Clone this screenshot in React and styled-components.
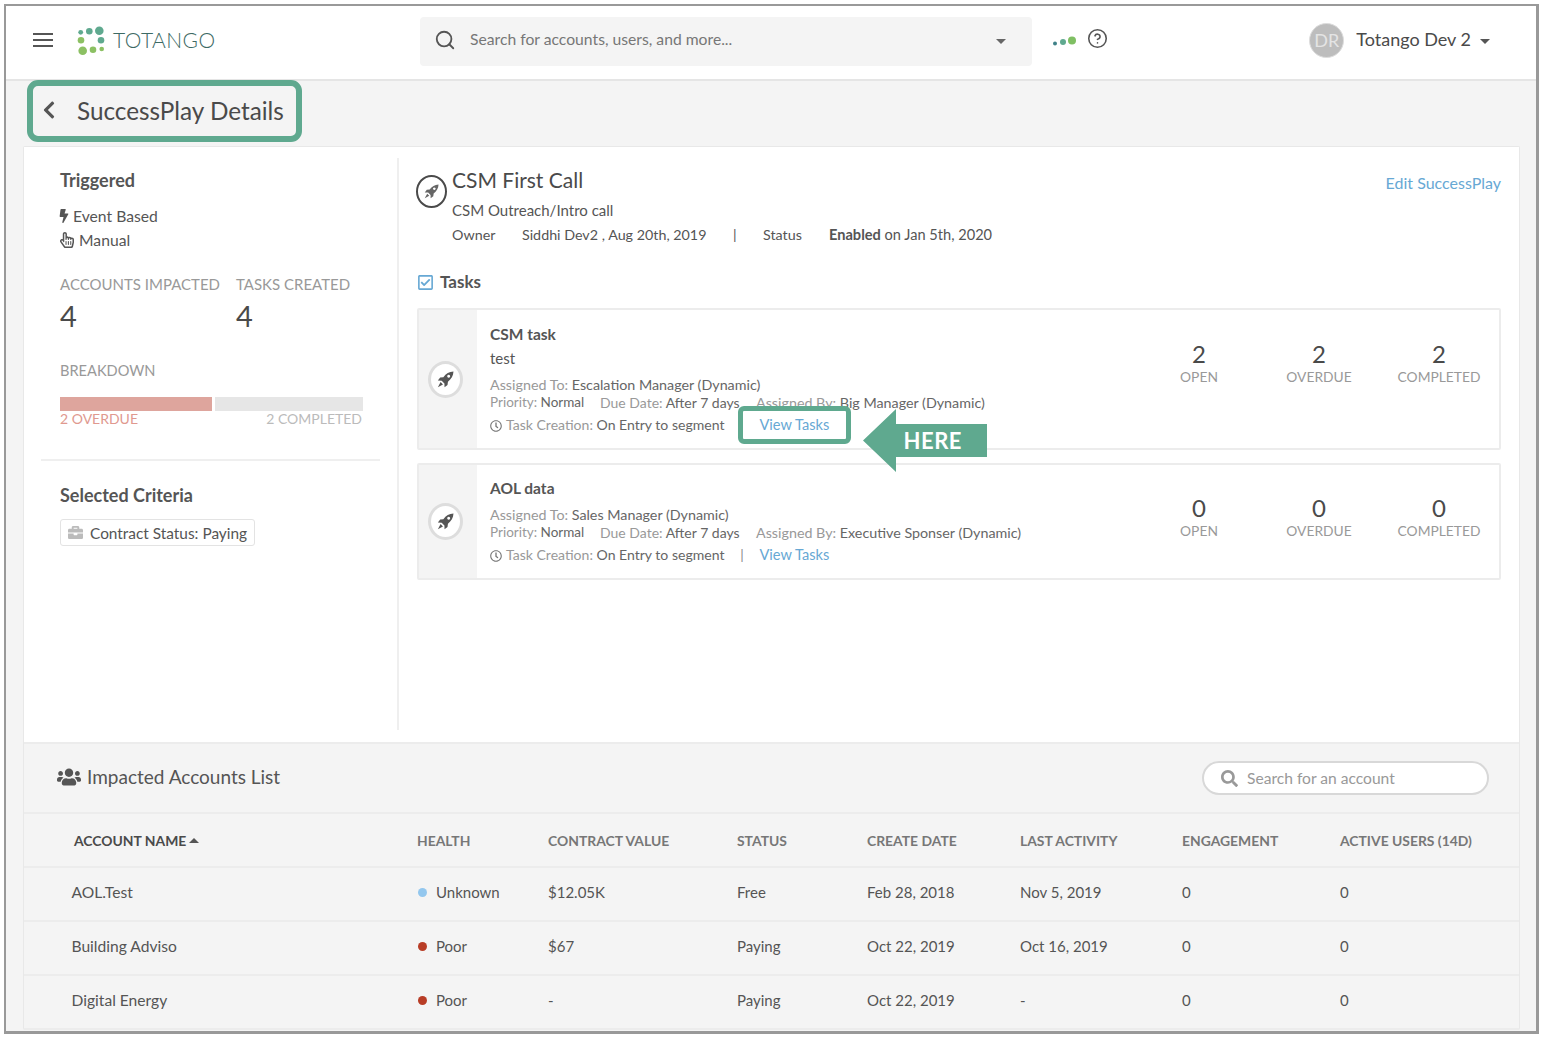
import React from 'react';
import styled, { createGlobalStyle } from 'styled-components';
import {
  FaBolt,
  FaBriefcase,
  FaChevronLeft,
  FaRegCheckSquare,
  FaRegClock,
  FaRegHandPointer,
  FaSearch,
  FaUsers,
} from 'react-icons/fa';
import { CircleHelp, Search } from 'lucide-react';

const GlobalStyle = createGlobalStyle`
  html, body {
    margin: 0;
    padding: 0;
    background: #fff;
  }
  body {
    font-family: "Lato", "Open Sans", sans-serif;
    color: #4a4a4a;
  }
  * {
    box-sizing: border-box;
  }
`;

const Frame = styled.div`
  width: 1535px;
  height: 1030px;
  margin: 4px 0 0 4px;
  border: 2px solid #999;
  border-right-width: 3px;
  border-bottom-width: 3px;
  background: #f4f4f4;
  overflow: hidden;
`;

const Header = styled.header`
  display: flex;
  align-items: center;
  height: 75px;
  background: #fff;
  border-bottom: 2px solid #e5e5e5;
  padding: 0 46px 3px 27px;
`;

const MenuButton = styled.div`
  display: flex;
  flex-direction: column;
  gap: 4px;
  width: 20px;
  margin: -2px 24px 0 0;

  span {
    height: 2px;
    background: #555;
  }
`;

const Logo = styled.div`
  display: flex;
  align-items: center;
  width: 343px;
  gap: 8px;

  svg {
    margin-top: -2px;
  }
`;

const LogoText = styled.span`
  margin-top: -3px;
  font-size: 21px;
  font-weight: 300;
  letter-spacing: 0.45px;
  color: #3d6a64;
`;

const SearchBar = styled.div`
  display: flex;
  align-items: center;
  width: 612px;
  height: 49px;
  background: #f4f4f4;
  border-radius: 4px;
  padding: 0 26px 0 14px;
  font-size: 15.7px;
  color: #777;

  svg {
    color: #555;
    margin: -3px 14px 0 0;
  }
`;

const SearchHint = styled.span`
  flex: 1;
  margin-top: -4px;
`;

const Caret = styled.span`
  width: 0;
  height: 0;
  border-left: 5px solid transparent;
  border-right: 5px solid transparent;
  border-${(p) => (p.$up ? 'bottom' : 'top')}: 5px solid ${(p) => p.$color || '#666'};
`;

const StatusTools = styled.div`
  display: flex;
  align-items: center;
  gap: 11px;
  margin-left: 20px;
  color: #555;
  flex: 1;

  svg:last-child {
    margin-top: -6px;
  }
`;

const UserMenu = styled.div`
  display: flex;
  align-items: center;
  font-size: 18px;
  color: #4a4a4a;
`;

const Avatar = styled.div`
  display: flex;
  align-items: center;
  justify-content: center;
  width: 35px;
  height: 35px;
  margin: -2px 12px 0 0;
  border-radius: 50%;
  background: #bdbdbd;
  border: 1px solid #ddd;
  color: #e4e4e4;
  font-size: 18px;
`;

const UserName = styled.span`
  margin: -4px 9px 0 0;
`;

const TitleBox = styled.div`
  display: flex;
  align-items: center;
  width: 275px;
  height: 62px;
  margin: -1px 0 4px 21px;
  border: 6px solid #5fa98f;
  border-radius: 11px;
  padding: 0 0 2px 6px;
  color: #555;

  svg {
    margin-right: 18px;
  }
`;

const PageTitle = styled.h1`
  margin: 0;
  font-size: 24.3px;
  font-weight: 400;
  color: #4a4a4a;
  white-space: nowrap;
`;

const Card = styled.main`
  width: 1497px;
  margin-left: 17px;
  border: 1px solid #e8e8e8;
  border-bottom: 0;
  border-radius: 2px;
`;

const TopSection = styled.section`
  display: flex;
  height: 597px;
  background: #fff;
  padding: 11px 0 12px;
  border-bottom: 2px solid #ececec;
`;

const LeftPanel = styled.aside`
  width: 375px;
  border-right: 2px solid #efefef;
  padding: 12px 17px 0 17px;
`;

const PanelBlock = styled.div`
  padding-left: 19px;
`;

const BoldHeading = styled.h3`
  margin: 0;
  font-size: 18px;
  font-weight: 700;
  line-height: 20px;
  color: #555;
`;

const TriggerRow = styled.div`
  display: flex;
  align-items: center;
  gap: ${(p) => p.$gap}px;
  height: 24px;
  font-size: 15.7px;
  color: #555;

  svg {
    margin-left: ${(p) => p.$iconOffset}px;
  }
`;

const TriggerList = styled.div`
  margin-top: 14px;
`;

const Metrics = styled.div`
  display: flex;
  margin-top: 22px;
`;

const Metric = styled.div`
  width: ${(p) => p.$width}px;
`;

const MutedLabel = styled.div`
  font-size: 15px;
  line-height: 20px;
  color: #999;
  white-space: nowrap;
`;

const MetricValue = styled.div`
  margin-top: 4px;
  font-size: 29px;
  line-height: 36px;
  color: #4a4a4a;
`;

const Breakdown = styled.div`
  margin-top: 27px;
`;

const BreakdownLabel = styled(MutedLabel)`
  font-size: 14.6px;
`;

const BarRow = styled.div`
  display: flex;
  gap: 3px;
  margin-top: 16px;
`;

const BarPiece = styled.div`
  width: ${(p) => p.$width}px;
  height: 14px;
  background: ${(p) => p.$color};
`;

const BarLabels = styled.div`
  display: flex;
  justify-content: space-between;
  width: 302px;
  font-size: 14px;
  line-height: 16px;
`;

const BarLabel = styled.span`
  color: ${(p) => p.$color};
`;

const PanelDivider = styled.div`
  height: 2px;
  margin-top: 32px;
  background: #efefef;
`;

const CriteriaBlock = styled(PanelBlock)`
  margin-top: 24px;
`;

const CriteriaChip = styled.div`
  display: inline-flex;
  align-items: center;
  gap: 7px;
  height: 27px;
  margin-top: 14px;
  padding: 0 7px;
  border: 1px solid #e3e3e3;
  border-radius: 3px;
  font-size: 15.4px;
  color: #555;

  svg {
    color: #bbb;
  }
`;

const RightPanel = styled.div`
  position: relative;
  flex: 1;
  padding: 8px 18px 0 18px;
`;

const PlayHeader = styled.div`
  display: flex;
  gap: 5px;
`;

const PlayIcon = styled.div`
  display: flex;
  align-items: center;
  justify-content: center;
  flex: none;
  width: 31px;
  height: 33px;
  margin: 9px 0 0 -1px;
  border: 2px solid #4a4a4a;
  border-radius: 50%;
  color: #666;
`;

const PlayBody = styled.div`
  flex: 1;
`;

const PlayTitleRow = styled.div`
  display: flex;
  justify-content: space-between;
  align-items: flex-start;
`;

const PlayTitle = styled.h2`
  margin: 0;
  font-size: 21px;
  font-weight: 400;
  line-height: 28px;
  color: #4a4a4a;
`;

const TextLink = styled.a`
  color: #67a8d4;
  white-space: nowrap;
`;

const EditLink = styled(TextLink)`
  margin-top: 7px;
  font-size: 16px;
`;

const PlaySubtitle = styled.div`
  margin-top: 7px;
  font-size: 15px;
  line-height: 18px;
  color: #555;
`;

const PlayMeta = styled.div`
  display: flex;
  margin-top: 7px;
  font-size: 14.3px;
  line-height: 18px;
  color: #555;
`;

const MetaItem = styled.span`
  width: ${(p) => p.$width}px;
  white-space: nowrap;
`;

const EnabledItem = styled.span`
  font-size: 14.6px;
  white-space: nowrap;

  b {
    font-weight: 700;
  }
`;

const TasksHeading = styled.div`
  display: flex;
  align-items: center;
  gap: 6px;
  margin-top: 27px;
  font-size: 17px;
  font-weight: 700;
  line-height: 22px;
  color: #555;

  svg {
    color: #67a8d4;
  }
`;

const TaskList = styled.div`
  position: relative;
  display: flex;
  flex-direction: column;
  gap: 13px;
  margin-top: 15px;
`;

const TaskCard = styled.article`
  display: flex;
  height: ${(p) => p.$height}px;
  border: 2px solid #ececec;
  border-radius: 2px;
`;

const TaskGutter = styled.div`
  display: flex;
  align-items: center;
  justify-content: center;
  width: 58px;
  padding-right: 5px;
  background: #f4f4f4;
`;

const RocketBadge = styled.div`
  display: flex;
  align-items: center;
  justify-content: center;
  width: 35px;
  height: 37px;
  border: 3px solid #ddd;
  border-radius: 50%;
  background: #fff;
  color: #555;
`;

const TaskBody = styled.div`
  flex: 1;
  padding: ${(p) => p.$top}px 0 0 13px;
  line-height: 17.5px;
  color: #999;
`;

const TaskName = styled.div`
  font-size: 15.5px;
  font-weight: 700;
  line-height: 20px;
  color: #555;
`;

const TaskDescription = styled.div`
  margin-top: 4px;
  font-size: 15px;
  line-height: 20px;
  color: #555;
`;

const TaskLine = styled.div`
  display: flex;
  align-items: center;
  height: 17.5px;
  margin-top: ${(p) => p.$top || 0}px;
  white-space: nowrap;

  svg {
    margin: 3px 4px 0 0;
    color: #777;
  }
`;

const TaskField = styled.span`
  width: ${(p) => (p.$width ? `${p.$width}px` : 'auto')};
  font-size: ${(p) => p.$size || 14.3}px;

  b {
    font-weight: 400;
    color: #666;
  }
`;

const LinkSeparator = styled.span`
  width: 35px;
  font-size: 14px;
  text-align: center;
  color: #888;
`;

const ViewTasksLink = styled(TextLink)`
  position: relative;
  font-size: 14.6px;

  ${(p) =>
    p.$highlighted &&
    `
    &::after {
      content: "";
      position: absolute;
      top: -10px;
      bottom: -10px;
      left: -21px;
      right: -22px;
      border: 5.5px solid #5fa98f;
      border-radius: 6px;
    }
  `}
`;

const TaskStats = styled.div`
  display: flex;
  width: 360px;
  padding-top: ${(p) => p.$top}px;
`;

const TaskStat = styled.div`
  width: 120px;
  text-align: center;
  font-size: 13.8px;
  line-height: 18px;
  color: #999;
`;

const TaskStatValue = styled.div`
  font-size: 24px;
  line-height: 29px;
  color: #4a4a4a;
`;

const HereArrow = styled.div`
  position: absolute;
  top: 101px;
  left: 446px;
  display: flex;
  align-items: center;
  justify-content: flex-end;
  width: 124px;
  height: 63px;
  padding-right: 25px;
  background: #5fa98f;
  clip-path: polygon(0 50%, 33px 0, 33px 15px, 100% 15px, 100% 48px, 33px 48px, 33px 100%);
  color: #fff;
  font-size: 22px;
  font-weight: 700;
  letter-spacing: 0.5px;
`;

const AccountsSection = styled.section`
  background: #f4f4f4;
`;

const AccountsBar = styled.div`
  display: flex;
  align-items: center;
  justify-content: space-between;
  height: 70px;
  padding: 0 30px 0 33px;
  border-bottom: 2px solid #ececec;
`;

const AccountsTitle = styled.div`
  display: flex;
  align-items: center;
  gap: 6px;
  margin-top: -3px;
  font-size: 19px;
  color: #555;
`;

const AccountSearch = styled.div`
  display: flex;
  align-items: center;
  gap: 9px;
  width: 287px;
  height: 34px;
  padding-left: 17px;
  background: #fff;
  border: 2px solid #d8d8d8;
  border-radius: 17px;
  font-size: 15.6px;
  color: #999;
`;

const TableRow = styled.div`
  display: grid;
  grid-template-columns: 393px 131px 189px 130px 153px 162px 158px 1fr;
  align-items: center;
  height: 54px;
  padding-bottom: ${(p) => (p.$header ? 0 : 4)}px;
  padding-top: ${(p) => (p.$header ? 1 : 0)}px;
  border-bottom: 2px solid #ececec;
`;

const HeaderCell = styled.div`
  display: flex;
  align-items: center;
  gap: 3px;
  padding-left: ${(p) => (p.$first ? 50 : 0)}px;
  font-size: 13.9px;
  font-weight: 700;
  color: ${(p) => (p.$sorted ? '#4a4a4a' : '#777')};
  white-space: nowrap;
`;

const BodyCell = styled.div`
  display: flex;
  align-items: center;
  gap: 9px;
  padding-left: ${(p) => (p.$first ? 47.5 : 0)}px;
  font-size: ${(p) => (p.$first ? 15.6 : 15)}px;
  color: #555;
  white-space: nowrap;
`;

const HealthDot = styled.span`
  width: 9px;
  height: 9px;
  margin-left: 1px;
  border-radius: 50%;
  background: ${(p) => p.$color};
`;

const tasks = [
  {
    name: 'CSM task',
    description: 'test',
    assignedTo: 'Escalation Manager (Dynamic)',
    assignedBy: 'Big Manager (Dynamic)',
    stats: [2, 2, 2],
    height: 142,
    bodyTop: 14,
    statsTop: 29,
    highlighted: true,
  },
  {
    name: 'AOL data',
    assignedTo: 'Sales Manager (Dynamic)',
    assignedBy: 'Executive Sponser (Dynamic)',
    stats: [0, 0, 0],
    height: 117,
    bodyTop: 13,
    statsTop: 28,
  },
];

const columns = [
  'ACCOUNT NAME',
  'HEALTH',
  'CONTRACT VALUE',
  'STATUS',
  'CREATE DATE',
  'LAST ACTIVITY',
  'ENGAGEMENT',
  'ACTIVE USERS (14D)',
];

const accounts = [
  { name: 'AOL.Test', health: 'Unknown', dot: '#93c7ee', value: '$12.05K', status: 'Free', created: 'Feb 28, 2018', activity: 'Nov 5, 2019' },
  { name: 'Building Adviso', health: 'Poor', dot: '#b83d26', value: '$67', status: 'Paying', created: 'Oct 22, 2019', activity: 'Oct 16, 2019' },
  { name: 'Digital Energy', health: 'Poor', dot: '#b83d26', value: '-', status: 'Paying', created: 'Oct 22, 2019', activity: '-' },
];

function TotangoMark() {
  return (
    <svg width="28" height="30" viewBox="0 0 28 30">
      <circle cx="3.7" cy="7.3" r="2.4" fill="#5fa98f" />
      <circle cx="12.3" cy="6.3" r="3.3" fill="#5fa98f" />
      <circle cx="22.3" cy="5.7" r="4.3" fill="#5fa98f" />
      <circle cx="4" cy="15.3" r="3.3" fill="#8cc063" />
      <circle cx="24" cy="15.3" r="3.3" fill="#5fa98f" />
      <circle cx="5.7" cy="25.7" r="4.3" fill="#8cc063" />
      <circle cx="16" cy="24.7" r="3.3" fill="#8cc063" />
      <circle cx="24.7" cy="24" r="2.3" fill="#8cc063" />
    </svg>
  );
}

function StatusDots() {
  return (
    <svg width="24" height="12" viewBox="0 0 24 12">
      <circle cx="3" cy="8.5" r="2" fill="#3f8188" />
      <circle cx="11" cy="7" r="3" fill="#5fa98f" />
      <circle cx="20" cy="5.5" r="4" fill="#7fbf63" />
    </svg>
  );
}

function RocketIcon({ size }) {
  return (
    <svg width={size} height={size} viewBox="0 0 16 16" fill="currentColor">
      <path
        fillRule="evenodd"
        d="M15.5.5C11.5.6 8.4 2.6 6 5.8L3 6.2.8 9l3.6.1 2.6 2.6.1 3.6 2.8-2.2.4-3C13.4 7.6 15.4 4.5 15.5.5ZM11 3.6a1.4 1.4 0 1 0 .01 0ZM3.4 10.4.8 15.2l4.8-2.6Z"
      />
    </svg>
  );
}

function TaskRow({ task }) {
  return (
    <TaskCard $height={task.height}>
      <TaskGutter>
        <RocketBadge>
          <RocketIcon size={17} />
        </RocketBadge>
      </TaskGutter>
      <TaskBody $top={task.bodyTop}>
        <TaskName>{task.name}</TaskName>
        {task.description && <TaskDescription>{task.description}</TaskDescription>}
        <TaskLine $top={8}>
          <TaskField>
            Assigned To: <b>{task.assignedTo}</b>
          </TaskField>
        </TaskLine>
        <TaskLine>
          <TaskField $width={110} $size={13.5}>
            Priority: <b>Normal</b>
          </TaskField>
          <TaskField $width={156} $size={14}>
            Due Date: <b>After 7 days</b>
          </TaskField>
          <TaskField>
            Assigned By: <b>{task.assignedBy}</b>
          </TaskField>
        </TaskLine>
        <TaskLine $top={5}>
          <FaRegClock size={12} />
          <TaskField $size={14.05}>
            Task Creation: <b>On Entry to segment</b>
          </TaskField>
          <LinkSeparator>{task.highlighted ? '' : '|'}</LinkSeparator>
          <ViewTasksLink $highlighted={task.highlighted}>View Tasks</ViewTasksLink>
        </TaskLine>
      </TaskBody>
      <TaskStats $top={task.statsTop}>
        {['OPEN', 'OVERDUE', 'COMPLETED'].map((label, i) => (
          <TaskStat key={label}>
            <TaskStatValue>{task.stats[i]}</TaskStatValue>
            {label}
          </TaskStat>
        ))}
      </TaskStats>
    </TaskCard>
  );
}

function App() {
  return (
    <>
      <GlobalStyle />
      <Frame>
        <Header>
          <MenuButton>
            <span />
            <span />
            <span />
          </MenuButton>
          <Logo>
            <TotangoMark />
            <LogoText>TOTANGO</LogoText>
          </Logo>
          <SearchBar>
            <Search size={22} strokeWidth={2} />
            <SearchHint>Search for accounts, users, and more...</SearchHint>
            <Caret />
          </SearchBar>
          <StatusTools>
            <StatusDots />
            <CircleHelp size={21} strokeWidth={1.8} />
          </StatusTools>
          <UserMenu>
            <Avatar>DR</Avatar>
            <UserName>Totango Dev 2</UserName>
            <Caret $color="#555" />
          </UserMenu>
        </Header>

        <TitleBox>
          <FaChevronLeft size={20} />
          <PageTitle>SuccessPlay Details</PageTitle>
        </TitleBox>

        <Card>
          <TopSection>
            <LeftPanel>
              <PanelBlock>
                <BoldHeading>Triggered</BoldHeading>
                <TriggerList>
                  <TriggerRow $gap={2} $iconOffset={-3}>
                    <FaBolt size={14} />
                    Event Based
                  </TriggerRow>
                  <TriggerRow $gap={4} $iconOffset={-1}>
                    <FaRegHandPointer size={16} />
                    Manual
                  </TriggerRow>
                </TriggerList>
                <Metrics>
                  <Metric $width={176}>
                    <MutedLabel>ACCOUNTS IMPACTED</MutedLabel>
                    <MetricValue>4</MetricValue>
                  </Metric>
                  <Metric $width={120}>
                    <MutedLabel>TASKS CREATED</MutedLabel>
                    <MetricValue>4</MetricValue>
                  </Metric>
                </Metrics>
                <Breakdown>
                  <BreakdownLabel>BREAKDOWN</BreakdownLabel>
                  <BarRow>
                    <BarPiece $width={152} $color="#dea59d" />
                    <BarPiece $width={148} $color="#e6e6e6" />
                  </BarRow>
                  <BarLabels>
                    <BarLabel $color="#e0998f">2 OVERDUE</BarLabel>
                    <BarLabel $color="#bbb">2 COMPLETED</BarLabel>
                  </BarLabels>
                </Breakdown>
              </PanelBlock>
              <PanelDivider />
              <CriteriaBlock>
                <BoldHeading>Selected Criteria</BoldHeading>
                <CriteriaChip>
                  <FaBriefcase size={15} />
                  Contract Status: Paying
                </CriteriaChip>
              </CriteriaBlock>
            </LeftPanel>

            <RightPanel>
              <PlayHeader>
                <PlayIcon>
                  <RocketIcon size={15} />
                </PlayIcon>
                <PlayBody>
                  <PlayTitleRow>
                    <PlayTitle>CSM First Call</PlayTitle>
                    <EditLink>Edit SuccessPlay</EditLink>
                  </PlayTitleRow>
                  <PlaySubtitle>CSM Outreach/Intro call</PlaySubtitle>
                  <PlayMeta>
                    <MetaItem $width={70}>Owner</MetaItem>
                    <MetaItem $width={211}>Siddhi Dev2 , Aug 20th, 2019</MetaItem>
                    <MetaItem $width={30}>|</MetaItem>
                    <MetaItem $width={66}>Status</MetaItem>
                    <EnabledItem>
                      <b>Enabled</b> on Jan 5th, 2020
                    </EnabledItem>
                  </PlayMeta>
                </PlayBody>
              </PlayHeader>
              <TasksHeading>
                <FaRegCheckSquare size={17} />
                Tasks
              </TasksHeading>
              <TaskList>
                {tasks.map((task) => (
                  <TaskRow key={task.name} task={task} />
                ))}
                <HereArrow>HERE</HereArrow>
              </TaskList>
            </RightPanel>
          </TopSection>

          <AccountsSection>
            <AccountsBar>
              <AccountsTitle>
                <FaUsers size={24} />
                Impacted Accounts List
              </AccountsTitle>
              <AccountSearch>
                <FaSearch size={17} />
                Search for an account
              </AccountSearch>
            </AccountsBar>
            <TableRow $header>
              {columns.map((column, i) => (
                <HeaderCell key={column} $first={i === 0} $sorted={i === 0}>
                  {column}
                  {i === 0 && <Caret $up $color="#555" />}
                </HeaderCell>
              ))}
            </TableRow>
            {accounts.map((account) => (
              <TableRow key={account.name}>
                <BodyCell $first>{account.name}</BodyCell>
                <BodyCell>
                  <HealthDot $color={account.dot} />
                  {account.health}
                </BodyCell>
                <BodyCell>{account.value}</BodyCell>
                <BodyCell>{account.status}</BodyCell>
                <BodyCell>{account.created}</BodyCell>
                <BodyCell>{account.activity}</BodyCell>
                <BodyCell>0</BodyCell>
                <BodyCell>0</BodyCell>
              </TableRow>
            ))}
          </AccountsSection>
        </Card>
      </Frame>
    </>
  );
}

export default App;
